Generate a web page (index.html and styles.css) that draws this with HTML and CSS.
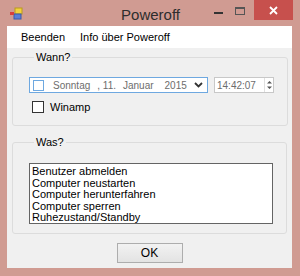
FILE: index.html
```html
<!DOCTYPE html>
<html lang="de">
<head>
    <meta charset="UTF-8">
    <title>Poweroff</title>
    <link rel="stylesheet" href="styles.css">
</head>
<body>
    <div class="window">
        <div class="titlebar">
            <svg class="app-icon" width="14" height="13" viewBox="0 0 14 13">
                <rect x="6" y="1" width="7" height="6" fill="#f3d23c" stroke="#b89a1c" stroke-width="1"/>
                <rect x="5" y="7" width="7" height="5" fill="#5b7fd6" stroke="#3a5aa8" stroke-width="1"/>
                <rect x="1" y="5" width="4" height="3" fill="#d9403a"/>
            </svg>
            <div class="title">Poweroff</div>
            <div class="caption-buttons">
                <span class="btn-min"></span>
                <span class="btn-max"></span>
                <span class="btn-close">
                    <svg width="9" height="9" viewBox="0 0 9 9">
                        <path d="M1 1 L8 8 M8 1 L1 8" stroke="#fff" stroke-width="1.8"/>
                    </svg>
                </span>
            </div>
        </div>

        <div class="client">
            <div class="menubar">
                <span class="menu-item">Beenden</span>
                <span class="menu-item">Info über Poweroff</span>
            </div>

            <fieldset class="group group-wann">
                <legend>Wann?</legend>
                <div class="date-row">
                    <div class="datepicker">
                        <span class="dp-check"></span>
                        <span class="dp-text">
                            <span class="dp-day">Sonntag</span>
                            <span class="dp-num">, 11.</span>
                            <span class="dp-month">Januar</span>
                            <span class="dp-year">2015</span>
                        </span>
                        <svg class="dp-arrow" width="9" height="6" viewBox="0 0 9 6">
                            <path d="M1 1 L4.5 4.5 L8 1" stroke="#333" stroke-width="1.8" fill="none"/>
                        </svg>
                    </div>
                    <div class="timepicker">
                        <span class="tp-text">14:42:07</span>
                        <span class="tp-spin">
                            <svg width="7" height="12" viewBox="0 0 7 12">
                                <path d="M1 4.5 L3.5 2 L6 4.5 Z M1 7.5 L3.5 10 L6 7.5 Z" fill="#555"/>
                            </svg>
                        </span>
                    </div>
                </div>
                <label class="check-row">
                    <span class="checkbox"></span>
                    <span>Winamp</span>
                </label>
            </fieldset>

            <fieldset class="group group-was">
                <legend>Was?</legend>
                <div class="listbox">
                    <div>Benutzer abmelden</div>
                    <div>Computer neustarten</div>
                    <div>Computer herunterfahren</div>
                    <div>Computer sperren</div>
                    <div>Ruhezustand/Standby</div>
                </div>
            </fieldset>

            <div class="footer">
                <button class="ok-button">OK</button>
            </div>
        </div>
    </div>
</body>
</html>
```

FILE: styles.css
```css
* {
    margin: 0;
    padding: 0;
    box-sizing: border-box;
}

body {
    width: 300px;
    height: 276px;
    overflow: hidden;
    font-family: 'Liberation Sans', sans-serif;
    color: #000;
}

.window {
    width: 300px;
    height: 276px;
    background: #d09b92;
    display: flex;
    flex-direction: column;
}

.titlebar {
    height: 26px;
    display: flex;
    align-items: flex-start;
    flex-shrink: 0;
}

.app-icon {
    margin: 7px 0 0 9px;
}

.title {
    flex: 1;
    text-align: center;
    font-size: 15px;
    line-height: 20px;
    margin-top: 5px;
    color: #2d2d2d;
    padding-left: 64px;
}

.caption-buttons {
    display: flex;
    align-items: flex-start;
    margin-right: 7px;
}

.btn-min {
    width: 9px;
    height: 2px;
    background: #333;
    margin: 12px 12px 0 0;
}

.btn-max {
    width: 10px;
    height: 8px;
    border: 1px solid #555;
    border-top-width: 2px;
    margin: 7px 9px 0 0;
}

.btn-close {
    width: 39px;
    height: 20px;
    background: #c7504d;
    display: flex;
    align-items: center;
    justify-content: center;
}

.client {
    flex: 1;
    margin: 0 8px 8px 7px;
    background: #f0f0f0;
    display: flex;
    flex-direction: column;
}

.menubar {
    height: 22px;
    background: #fff;
    display: flex;
    align-items: center;
    padding-left: 8px;
    font-size: 11px;
}

.menu-item {
    padding: 0 6px;
    margin-right: 3px;
}

.group {
    margin: 0 5px;
    border: 1px solid #dcdcdc;
    border-radius: 3px;
    font-size: 11px;
}

.group legend {
    margin-left: 5px;
    padding: 0 2px;
    line-height: 15px;
}

.group-wann {
    margin-top: 2px;
    height: 76px;
    padding: 12px 13px 0 16px;
}

.date-row {
    display: flex;
    gap: 6px;
}

.datepicker {
    width: 179px;
    height: 16px;
    border: 1px solid #6ea8e0;
    background: #fff;
    display: flex;
    align-items: center;
    padding-left: 3px;
}

.dp-check {
    width: 11px;
    height: 11px;
    border: 1px solid #6ea8e0;
    background: #fff;
}

.dp-text {
    flex: 1;
    display: flex;
    margin-left: 9px;
    font-size: 10px;
    color: #6d6d6d;
    white-space: pre;
}

.dp-num {
    margin-left: 7px;
}

.dp-month {
    margin-left: 7px;
}

.dp-year {
    margin-left: 11px;
}

.dp-arrow {
    margin-right: 4px;
}

.timepicker {
    width: 60px;
    height: 16px;
    border: 1px solid #c8c8c8;
    background: #fff;
    display: flex;
    align-items: center;
    padding-left: 2px;
}

.tp-text {
    flex: 1;
    font-size: 10px;
    color: #6d6d6d;
}

.tp-spin {
    width: 9px;
    height: 14px;
    border-left: 1px solid #e0e0e0;
    display: flex;
    align-items: center;
    justify-content: center;
}

.check-row {
    display: flex;
    align-items: center;
    margin-top: 8px;
    margin-left: 3px;
    font-size: 11px;
}

.checkbox {
    width: 12px;
    height: 12px;
    border: 1px solid #333;
    background: #fff;
    margin-right: 6px;
}

.group-was {
    margin-top: 9px;
    height: 99px;
    padding: 13px 13px 0 16px;
}

.listbox {
    height: 61px;
    background: #fff;
    border: 1px solid #646464;
    padding: 2px 0 0 2px;
    font-size: 11px;
    line-height: 11.5px;
}

.footer {
    flex: 1;
    display: flex;
    justify-content: center;
    align-items: flex-start;
    padding-top: 9px;
}

.ok-button {
    width: 66px;
    height: 20px;
    border: 1px solid #adadad;
    background: linear-gradient(#f2f2f2, #e3e3e3);
    font-family: 'Liberation Sans', sans-serif;
    font-size: 12px;
    color: #000;
}
```
